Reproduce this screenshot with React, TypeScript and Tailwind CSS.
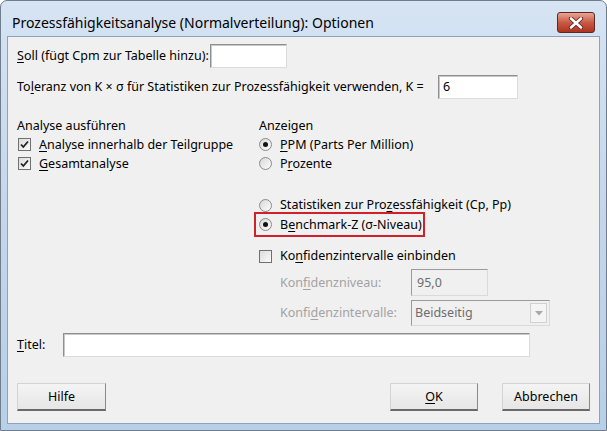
import React from "react";

const font = { fontFamily: '"Noto Sans", "Open Sans", sans-serif' };

const U = ({ children }: { children: React.ReactNode }) => (
  <span className="underline underline-offset-2">{children}</span>
);

const CheckBox = ({ checked }: { checked?: boolean }) => (
  <span className="w-[13px] h-[13px] border border-[#707070] bg-gradient-to-br from-[#dcdcdc] to-[#fbfbfb] flex items-center justify-center shrink-0">
    {checked ? (
      <svg width="9" height="9" viewBox="0 0 9 9">
        <path d="M1 4.5 L3.3 7 L8 1.5" stroke="#222" strokeWidth="1.8" fill="none" />
      </svg>
    ) : null}
  </span>
);

const Radio = ({ checked }: { checked?: boolean }) => (
  <span className="w-[13px] h-[13px] rounded-full border border-[#8a8a8a] bg-gradient-to-br from-[#d8d8d8] to-[#fdfdfd] flex items-center justify-center shrink-0">
    {checked ? <span className="w-[5px] h-[5px] rounded-full bg-[#111]" /> : null}
  </span>
);

const inputCls =
  "bg-white border border-t-[#8f8f8f] border-l-[#8f8f8f] border-r-[#dcdcdc] border-b-[#dcdcdc] shadow-[inset_1px_1px_0_#c8c8c8]";

const Button = ({ children, wide }: { children: React.ReactNode; wide?: boolean }) => (
  <div
    className={`h-[28px] ${wide ? "w-[89px]" : "w-[88px]"} flex items-center justify-center bg-gradient-to-b from-[#f4f4f4] to-[#e6e6e6] border border-t-[#d4d4d4] border-l-[#d4d4d4] border-r-[#8a8a8a] border-b-[#6a6a6a] border-b-2 text-black`}
  >
    {children}
  </div>
);

export default function App() {
  return (
    <div
      style={font}
      className="w-[607px] h-[431px] rounded-t-[7px] border border-[#6f7d8c] bg-gradient-to-b from-[#d6e4f3] via-[#c3d6ec] to-[#b8cfe8] pt-[35px] px-[6px] pb-[6px] relative text-black"
    >
      {/* title bar */}
      <div className="absolute left-[11px] top-[12px] text-[14px] leading-[20px] text-black">
        Prozessfähigkeitsanalyse (Normalverteilung): Optionen
      </div>
      <div className="absolute left-[556px] top-[11px] w-[38px] h-[21px] rounded-[3px] border border-[#5a2a22] bg-gradient-to-b from-[#e8a493] via-[#c75a45] to-[#b0321d] flex items-center justify-center">
        <svg width="16" height="12" viewBox="0 0 16 12">
          <path d="M3 1.5 L13 10.5 M13 1.5 L3 10.5" stroke="#5a2020" strokeWidth="4.2" strokeLinecap="round" />
          <path d="M3 1.5 L13 10.5 M13 1.5 L3 10.5" stroke="#fff" strokeWidth="2.6" strokeLinecap="round" />
        </svg>
      </div>

      {/* client area */}
      <div className="w-full h-full border border-[#8da2bd] bg-[#f0f0f0] pl-[9px] pt-[7px] text-[12.5px] leading-[16px] flex flex-col">
        <div className="h-[24px] flex items-center">
          <span>
            <U>S</U>oll (fügt Cpm zur Tabelle hinzu):
          </span>
          <div className={`ml-[1px] w-[77px] h-[24px] ${inputCls}`} />
        </div>

        <div className="mt-[7px] h-[24px] flex items-center">
          <span className="w-[421px]">
            To<U>l</U>eranz von K × σ für Statistiken zur Prozessfähigkeit verwenden, K =
          </span>
          <div className={`w-[80px] h-[24px] flex items-center pl-[4px] ${inputCls}`}>6</div>
        </div>

        <div className="mt-[17px] flex">
          {/* left group */}
          <div className="w-[242px] flex flex-col">
            <div className="h-[19px] flex items-center">Analyse ausführen</div>
            <div className="h-[19px] flex items-center gap-[8px] pl-[1px]">
              <CheckBox checked />
              <span>
                <U>A</U>nalyse innerhalb der Teilgruppe
              </span>
            </div>
            <div className="h-[19px] flex items-center gap-[8px] pl-[1px]">
              <CheckBox checked />
              <span>
                <U>G</U>esamtanalyse
              </span>
            </div>
          </div>

          {/* right group */}
          <div className="flex flex-col">
            <div className="h-[19px] flex items-center">Anzeigen</div>
            <div className="h-[19px] flex items-center gap-[8px]">
              <Radio checked />
              <span>
                <U>P</U>PM (Parts Per Million)
              </span>
            </div>
            <div className="h-[19px] flex items-center gap-[8px]">
              <Radio />
              <span>
                P<U>r</U>ozente
              </span>
            </div>
            <div className="mt-[22px] h-[20px] flex items-center gap-[8px]">
              <Radio />
              <span>
                Statistiken zur Pro<U>z</U>essfähigkeit (Cp, Pp)
              </span>
            </div>
            <div className="-mt-[3px] -ml-[5px] w-[171px] h-[25px] border-2 border-[#d0202a] flex items-center gap-[8px] pl-[3px]">
              <Radio checked />
              <span>
                B<U>e</U>nchmark-Z (σ-Niveau)
              </span>
            </div>
            <div className="mt-[9px] h-[20px] flex items-center gap-[8px]">
              <CheckBox />
              <span>
                Ko<U>n</U>fidenzintervalle einbinden
              </span>
            </div>
            <div className="mt-[3px] h-[27px] flex items-center pl-[21px] text-[#a3a3a3]">
              <span className="w-[131px]">
                Kon<U>f</U>idenzniveau:
              </span>
              <div className="w-[77px] h-[27px] flex items-center pl-[5px] bg-[#f0f0f0] border border-t-[#9a9a9a] border-l-[#9a9a9a] border-r-[#dadada] border-b-[#dadada] text-[#6d6d6d]">
                95,0
              </div>
            </div>
            <div className="mt-[4px] h-[26px] flex items-center pl-[21px] text-[#a3a3a3]">
              <span className="w-[131px]">
                Konfi<U>d</U>enzintervalle:
              </span>
              <div className="w-[139px] h-[26px] flex items-center justify-between pl-[3px] pr-[2px] bg-[#f0f0f0] border border-t-[#9a9a9a] border-l-[#9a9a9a] border-r-[#dadada] border-b-[#dadada] text-[#6d6d6d]">
                <span>Beidseitig</span>
                <span className="w-[17px] h-[20px] border border-[#d0d0d0] bg-[#f4f4f4] flex items-center justify-center">
                  <svg width="8" height="5" viewBox="0 0 8 5">
                    <path d="M0 0 H8 L4 4.5 Z" fill="#a8a8a8" />
                  </svg>
                </span>
              </div>
            </div>
          </div>
        </div>

        <div className="mt-[7px] h-[24px] flex items-center">
          <span className="w-[46px]">
            <U>T</U>itel:
          </span>
          <div className={`w-[467px] h-[24px] ${inputCls}`} />
        </div>

        <div className="mt-[26px] flex items-center pr-[9px]">
          <Button wide>Hilfe</Button>
          <div className="flex-1" />
          <Button>
            <U>O</U>K
          </Button>
          <div className="w-[24px]" />
          <Button>Abbrechen</Button>
        </div>
      </div>
    </div>
  );
}
